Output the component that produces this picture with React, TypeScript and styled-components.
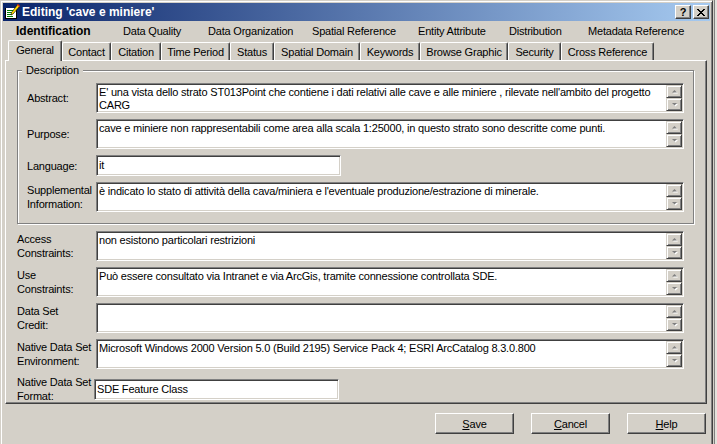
import styled, { createGlobalStyle } from 'styled-components'

const FACE = '#d4d0c8'
const SHADOW = '#808080'
const DARK = '#404040'
const FONT = '"Liberation Sans", Arial, sans-serif'

const GlobalStyle = createGlobalStyle`
    html, body {
        margin: 0;
        padding: 0;
    }
    body {
        background: ${FACE};
        font-family: ${FONT};
        font-size: 11px;
        letter-spacing: -0.2px;
        color: #000;
    }
    * {
        box-sizing: border-box;
    }
`

const Screen = styled.div`
    display: flex;
    width: 717px;
    height: 444px;
    overflow: hidden;
`

const Window = styled.div`
    flex: none;
    width: 713px;
    height: 470px;
    display: flex;
    flex-direction: column;
    padding: 2px;
    background: ${FACE};
    border: 1px solid;
    border-color: ${FACE} ${DARK} ${DARK} ${FACE};
    box-shadow: inset 1px 1px 0 #fff, inset -1px -1px 0 ${SHADOW};
`

const Backdrop = styled.div`
    flex: 1;
    margin-left: 1px;
    background: #e4e2dc;
    border-left: 1px solid ${SHADOW};
`

const TitleBar = styled.div`
    flex: none;
    height: 18px;
    display: flex;
    align-items: center;
    padding: 0 1px 0 1px;
    background: linear-gradient(to right, #0a246a, #a6caf0);
`

const TitleText = styled.span`
    flex: 1;
    margin-left: 2px;
    color: #fff;
    font-weight: bold;
    font-size: 12px;
    letter-spacing: 0;
    white-space: nowrap;
`

const CaptionButtons = styled.div`
    display: flex;
    gap: 2px;
`

const CaptionButton = styled.div`
    width: 16px;
    height: 14px;
    display: flex;
    align-items: center;
    justify-content: center;
    background: ${FACE};
    border: 1px solid;
    border-color: #fff ${DARK} ${DARK} #fff;
    box-shadow: inset -1px -1px 0 ${SHADOW};
    font-weight: bold;
    font-size: 11px;
    letter-spacing: 0;
    line-height: 1;
`

const Body = styled.div`
    display: flex;
    flex-direction: column;
    padding: 0 3px 0 2px;
`

const SectionNav = styled.div`
    height: 19px;
    display: flex;
    align-items: center;
    padding-left: 11px;
    white-space: nowrap;
`

const SectionItem = styled.div<{ $w?: number; $active?: boolean }>`
    width: ${p => (p.$w ? `${p.$w}px` : 'auto')};
    font-weight: ${p => (p.$active ? 'bold' : 'normal')};
    font-size: ${p => (p.$active ? '12px' : '11px')};
    letter-spacing: ${p => (p.$active ? '0' : '-0.2px')};
`

const TabStrip = styled.div`
    height: 20px;
    display: flex;
    align-items: flex-end;
    padding-left: 3px;
`

const Tab = styled.div<{ $w: number; $selected?: boolean }>`
    position: relative;
    z-index: ${p => (p.$selected ? 1 : 0)};
    width: ${p => p.$w}px;
    height: ${p => (p.$selected ? 21 : 18)}px;
    margin-bottom: ${p => (p.$selected ? -1 : 0)}px;
    display: flex;
    align-items: center;
    justify-content: center;
    padding-bottom: ${p => (p.$selected ? 2 : 0)}px;
    padding-top: ${p => (p.$selected ? 0 : 1)}px;
    background: ${FACE};
    border-top: 1px solid #fff;
    border-left: 1px solid #fff;
    border-right: 1px solid ${DARK};
    border-radius: 2px 2px 0 0;
    box-shadow: inset -1px 0 0 ${SHADOW};
    white-space: nowrap;
`

const Panel = styled.div`
    height: 344px;
    display: flex;
    flex-direction: column;
    padding: 1px 12px 0 11px;
    border: 1px solid;
    border-color: #fff ${DARK} ${DARK} #fff;
    box-shadow: inset -1px -1px 0 ${SHADOW};
`

const Group = styled.fieldset`
    margin: 1px 0 0 0;
    min-width: 0;
    padding: 6px 9px 11px 9px;
    border: 1px solid ${SHADOW};
    box-shadow: inset 1px 1px 0 #fff, 1px 1px 0 #fff;
`

const GroupTitle = styled.legend`
    margin-left: -5px;
    padding: 0 4px;
    line-height: 14px;
    background: ${FACE};
`

const Rows = styled.div<{ $outside?: boolean }>`
    display: flex;
    flex-direction: column;
    gap: 6px;
    margin-top: ${p => (p.$outside ? 7 : 0)}px;
    padding-right: ${p => (p.$outside ? 10 : 0)}px;
`

const Row = styled.div`
    display: flex;
    align-items: center;
`

const Label = styled.div<{ $w: number }>`
    flex: none;
    width: ${p => p.$w}px;
    line-height: 14px;
    white-space: nowrap;
`

const Sunken = styled.div<{ $w?: number; $h: number }>`
    width: ${p => (p.$w ? `${p.$w}px` : 'auto')};
    flex: ${p => (p.$w ? 'none' : '1')};
    height: ${p => p.$h}px;
    display: flex;
    padding: 1px;
    background: #fff;
    border: 1px solid;
    border-color: ${SHADOW} #fff #fff ${SHADOW};
    box-shadow: inset 1px 1px 0 ${DARK}, inset -1px -1px 0 ${FACE};
`

const FieldText = styled.div<{ $single?: boolean }>`
    flex: 1;
    padding: ${p => (p.$single ? '0 0 0 1px' : '1px 2px 0 1px')};
    line-height: ${p => (p.$single ? '17px' : '13px')};
    overflow: hidden;
    white-space: ${p => (p.$single ? 'nowrap' : 'normal')};
`

const ScrollBar = styled.div`
    flex: none;
    width: 16px;
    display: flex;
    flex-direction: column;
`

const ScrollButton = styled.div`
    flex: 1;
    display: flex;
    align-items: center;
    justify-content: center;
    background: ${FACE};
    border: 1px solid;
    border-color: ${FACE} ${DARK} ${DARK} ${FACE};
    box-shadow: inset 1px 1px 0 #fff, inset -1px -1px 0 ${SHADOW};
`

const ButtonBar = styled.div`
    display: flex;
    justify-content: flex-end;
    gap: 17px;
    padding: 9px 1px 0 0;
`

const PushButton = styled.div`
    width: 79px;
    height: 21px;
    display: flex;
    align-items: center;
    justify-content: center;
    background: ${FACE};
    border: 1px solid;
    border-color: #fff ${DARK} ${DARK} #fff;
    box-shadow: inset -1px -1px 0 ${SHADOW};
`

const Arrow = ({ down }: { down?: boolean }) => (
    <svg width="9" height="6" viewBox="0 0 9 6">
        {down ? (
            <>
                <polygon points="3,2 8,2 5.5,4.5" fill="#fff" />
                <polygon points="2,1 7,1 4.5,3.5" fill={SHADOW} />
            </>
        ) : (
            <>
                <polygon points="3,4.5 8,4.5 5.5,2" fill="#fff" />
                <polygon points="2,3.5 7,3.5 4.5,1" fill={SHADOW} />
            </>
        )}
    </svg>
)

const AppIcon = () => (
    <svg width="16" height="16" viewBox="0 0 16 16">
        <rect x="1.5" y="2.5" width="11" height="12" fill="#fff" stroke="#000" />
        <rect x="1" y="2" width="12" height="2" fill="#0a246a" />
        <line x1="3" y1="6.5" x2="10" y2="6.5" stroke="#008000" />
        <line x1="3" y1="8.5" x2="9" y2="8.5" stroke="#008000" />
        <line x1="3" y1="10.5" x2="8" y2="10.5" stroke="#008000" />
        <line x1="3" y1="12.5" x2="9" y2="12.5" stroke="#008000" />
        <polygon points="14,0 16,2 9,10 7,11 7.5,8.5" fill="#ffd800" stroke="#000" strokeWidth="0.6" />
        <polygon points="14,0 16,2 15,3 13,1" fill="#e03020" />
    </svg>
)

const CloseGlyph = () => (
    <svg width="8" height="7" viewBox="0 0 8 7">
        <path d="M0 0 L7 7 M1 0 L8 7 M7 0 L0 7 M8 0 L1 7" stroke="#000" strokeWidth="1" />
    </svg>
)

const Field = ({ text, w, h = 30, single }: { text?: string; w?: number; h?: number; single?: boolean }) => (
    <Sunken $w={w} $h={h}>
        <FieldText $single={single}>{text}</FieldText>
        {!single && (
            <ScrollBar>
                <ScrollButton><Arrow /></ScrollButton>
                <ScrollButton><Arrow down /></ScrollButton>
            </ScrollBar>
        )}
    </Sunken>
)

const sections = [
    { name: 'Identification', w: 107, active: true },
    { name: 'Data Quality', w: 85 },
    { name: 'Data Organization', w: 104 },
    { name: 'Spatial Reference', w: 106 },
    { name: 'Entity Attribute', w: 91 },
    { name: 'Distribution', w: 79 },
    { name: 'Metadata Reference' },
]

const tabs = [
    { name: 'General', w: 54, selected: true },
    { name: 'Contact', w: 49 },
    { name: 'Citation', w: 50 },
    { name: 'Time Period', w: 69 },
    { name: 'Status', w: 44 },
    { name: 'Spatial Domain', w: 86 },
    { name: 'Keywords', w: 60 },
    { name: 'Browse Graphic', w: 88 },
    { name: 'Security', w: 53 },
    { name: 'Cross Reference', w: 93 },
]

const App = () => (
    <>
        <GlobalStyle />
        <Screen>
            <Window>
                <TitleBar>
                    <AppIcon />
                    <TitleText>Editing 'cave e miniere'</TitleText>
                    <CaptionButtons>
                        <CaptionButton>?</CaptionButton>
                        <CaptionButton><CloseGlyph /></CaptionButton>
                    </CaptionButtons>
                </TitleBar>
                <Body>
                    <SectionNav>
                        {sections.map(s => (
                            <SectionItem key={s.name} $w={s.w} $active={s.active}>{s.name}</SectionItem>
                        ))}
                    </SectionNav>
                    <TabStrip>
                        {tabs.map(t => (
                            <Tab key={t.name} $w={t.w} $selected={t.selected}>{t.name}</Tab>
                        ))}
                    </TabStrip>
                    <Panel>
                        <Group>
                            <GroupTitle>Description</GroupTitle>
                            <Rows>
                                <Row>
                                    <Label $w={69}>Abstract:</Label>
                                    <Field text="E' una vista dello strato ST013Point che contiene i dati relativi alle cave e alle miniere , rilevate nell'ambito del progetto CARG" />
                                </Row>
                                <Row>
                                    <Label $w={69}>Purpose:</Label>
                                    <Field text="cave e miniere non rappresentabili come area alla scala 1:25000, in questo strato sono descritte come punti." />
                                </Row>
                                <Row>
                                    <Label $w={69}>Language:</Label>
                                    <Field text="it" w={245} h={21} single />
                                </Row>
                                <Row>
                                    <Label $w={69}>Supplemental<br />Information:</Label>
                                    <Field text="è indicato lo stato di attività della cava/miniera e l'eventuale produzione/estrazione di minerale." />
                                </Row>
                            </Rows>
                        </Group>
                        <Rows $outside>
                            <Row>
                                <Label $w={79}>Access<br />Constraints:</Label>
                                <Field text="non esistono particolari restrizioni" />
                            </Row>
                            <Row>
                                <Label $w={79}>Use<br />Constraints:</Label>
                                <Field text="Può essere consultato via Intranet e via ArcGis, tramite connessione controllata SDE." />
                            </Row>
                            <Row>
                                <Label $w={79}>Data Set<br />Credit:</Label>
                                <Field />
                            </Row>
                            <Row>
                                <Label $w={79}>Native Data Set<br />Environment:</Label>
                                <Field text="Microsoft Windows 2000 Version 5.0 (Build 2195) Service Pack 4; ESRI ArcCatalog 8.3.0.800" />
                            </Row>
                            <Row>
                                <Label $w={77}>Native Data Set<br />Format:</Label>
                                <Field text="SDE Feature Class" w={245} h={21} single />
                            </Row>
                        </Rows>
                    </Panel>
                    <ButtonBar>
                        <PushButton><span><u>S</u>ave</span></PushButton>
                        <PushButton><span><u>C</u>ancel</span></PushButton>
                        <PushButton><span><u>H</u>elp</span></PushButton>
                    </ButtonBar>
                </Body>
            </Window>
            <Backdrop />
        </Screen>
    </>
)

export default App
